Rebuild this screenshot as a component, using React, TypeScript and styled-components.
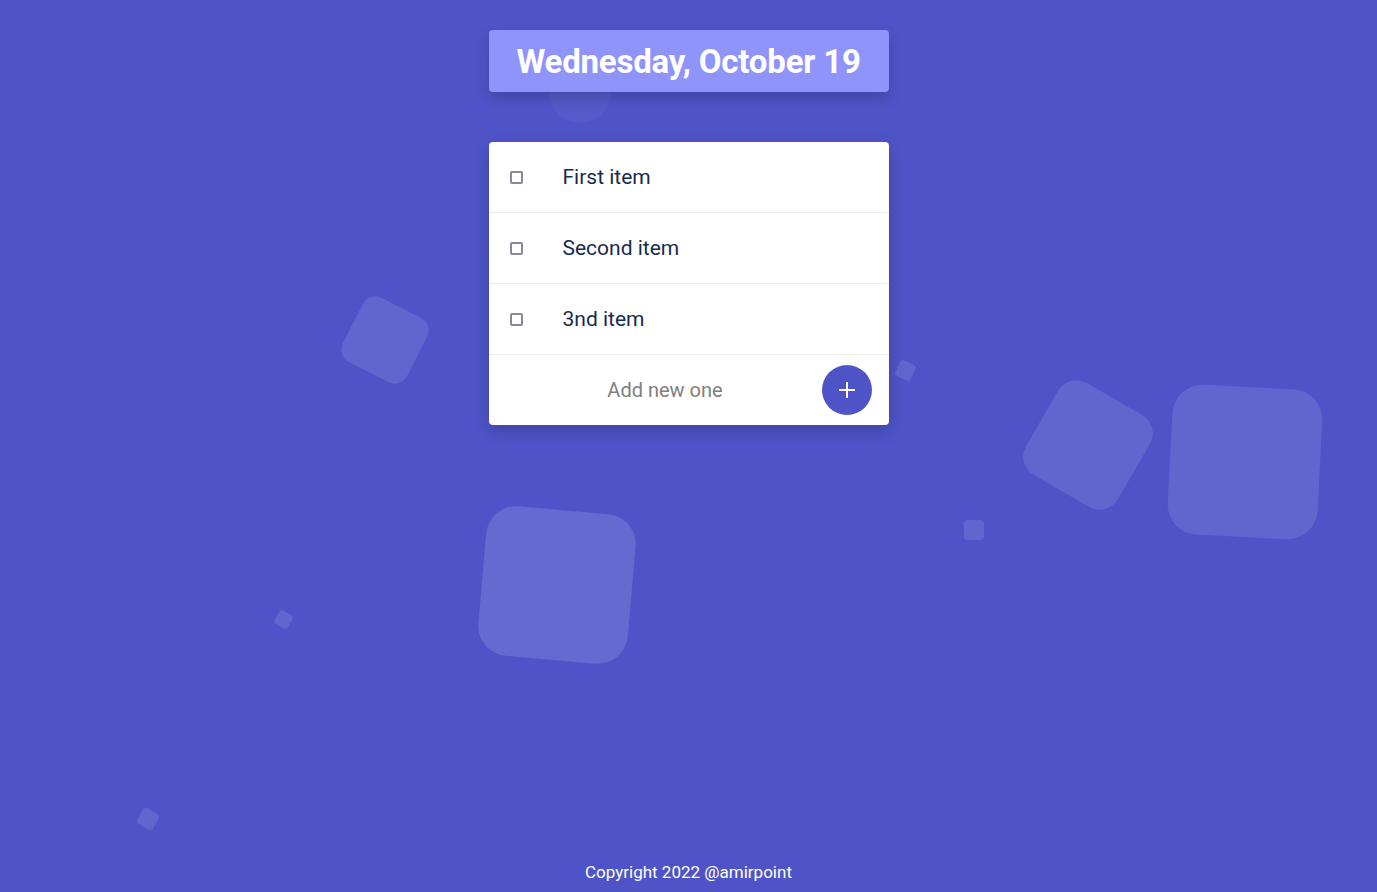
import React from 'react'
import styled, { createGlobalStyle } from 'styled-components'

const GlobalStyle = createGlobalStyle`
  * { box-sizing: border-box; }
  body {
    margin: 0;
    background: #4e54c8;
    font-family: Roboto, "Open Sans", sans-serif;
  }
`

const Page = styled.div`
  position: relative;
  min-height: 100vh;
  display: flex;
  flex-direction: column;
  align-items: center;
  overflow: hidden;
  padding-top: 30px;
`

const Squares = styled.ul`
  position: absolute;
  inset: 0;
  margin: 0;
  padding: 0;
  list-style: none;
  pointer-events: none;
`

const Square = styled.li<{ $x: number; $y: number; $size: number; $rot: number; $alpha?: number; $round?: boolean }>`
  position: absolute;
  left: ${p => p.$x - p.$size / 2}px;
  top: ${p => p.$y - p.$size / 2}px;
  width: ${p => p.$size}px;
  height: ${p => p.$size}px;
  border-radius: ${p => (p.$round ? '50%' : `${Math.round(p.$size * 0.2)}px`)};
  background: rgba(255, 255, 255, ${p => p.$alpha ?? 0.11});
  transform: rotate(${p => p.$rot}deg);
`

const DateBox = styled.h1`
  position: relative;
  z-index: 1;
  width: 400px;
  height: 62px;
  margin: 0;
  display: flex;
  align-items: center;
  justify-content: center;
  background: #8f94fb;
  border-radius: 4px;
  box-shadow: 0 6px 14px rgba(0, 0, 0, 0.18);
  color: #fff;
  font-size: 33px;
  font-weight: 700;
  letter-spacing: -0.2px;
`

const Card = styled.div`
  position: relative;
  z-index: 1;
  width: 400px;
  margin-top: 50px;
  background: #fff;
  border-radius: 4px;
  box-shadow: 0 6px 16px rgba(0, 0, 0, 0.2);
`

const Row = styled.label`
  display: flex;
  align-items: center;
  height: 71px;
  padding-left: 21px;
  border-bottom: 1px solid #ececec;
  cursor: pointer;
`

const Check = styled.span`
  width: 13px;
  height: 13px;
  border: 2px solid #8a8799;
  border-radius: 2px;
  flex-shrink: 0;
`

const ItemText = styled.span`
  margin-left: 40px;
  font-size: 21px;
  color: #172b4d;
`

const AddRow = styled.form`
  display: flex;
  align-items: center;
  height: 70px;
  padding: 0 17px 0 20px;
`

const AddInput = styled.input`
  flex: 1;
  border: none;
  outline: none;
  background: transparent;
  text-align: center;
  font-family: inherit;
  font-size: 20px;
  color: #808080;
  &::placeholder { color: #808080; }
`

const AddButton = styled.button`
  width: 50px;
  height: 50px;
  border-radius: 50%;
  border: none;
  background: #4e54c8;
  display: flex;
  align-items: center;
  justify-content: center;
  cursor: pointer;
  padding: 0;
`

const Footer = styled.footer`
  position: relative;
  z-index: 1;
  margin-top: auto;
  padding-bottom: 10px;
  color: #fff;
  font-size: 17px;
`

const items = ['First item', 'Second item', '3nd item']

const squares = [
  { x: 580, y: 92, size: 62, rot: 0, alpha: 0.035, round: true },
  { x: 385, y: 340, size: 72, rot: 27 },
  { x: 905, y: 370, size: 17, rot: 25 },
  { x: 1088, y: 445, size: 106, rot: 30 },
  { x: 1245, y: 462, size: 150, rot: 3 },
  { x: 974, y: 530, size: 20, rot: 0 },
  { x: 557, y: 585, size: 150, rot: 5, alpha: 0.13 },
  { x: 283, y: 619, size: 15, rot: 30 },
  { x: 148, y: 819, size: 18, rot: 30 },
]

export default function App() {
  return (
    <>
      <GlobalStyle />
      <Page>
        <Squares>
          {squares.map((s, i) => (
            <Square key={i} $x={s.x} $y={s.y} $size={s.size} $rot={s.rot} $alpha={s.alpha} $round={s.round} />
          ))}
        </Squares>
        <DateBox>Wednesday, October 19</DateBox>
        <Card>
          {items.map(item => (
            <Row key={item}>
              <Check />
              <ItemText>{item}</ItemText>
            </Row>
          ))}
          <AddRow onSubmit={e => e.preventDefault()}>
            <AddInput placeholder="Add new one" />
            <AddButton type="submit" aria-label="Add">
              <svg width="20" height="20" viewBox="0 0 20 20">
                <path d="M10 2v16M2 10h16" stroke="#fff" strokeWidth="2" />
              </svg>
            </AddButton>
          </AddRow>
        </Card>
        <Footer>Copyright 2022 @amirpoint</Footer>
      </Page>
    </>
  )
}
